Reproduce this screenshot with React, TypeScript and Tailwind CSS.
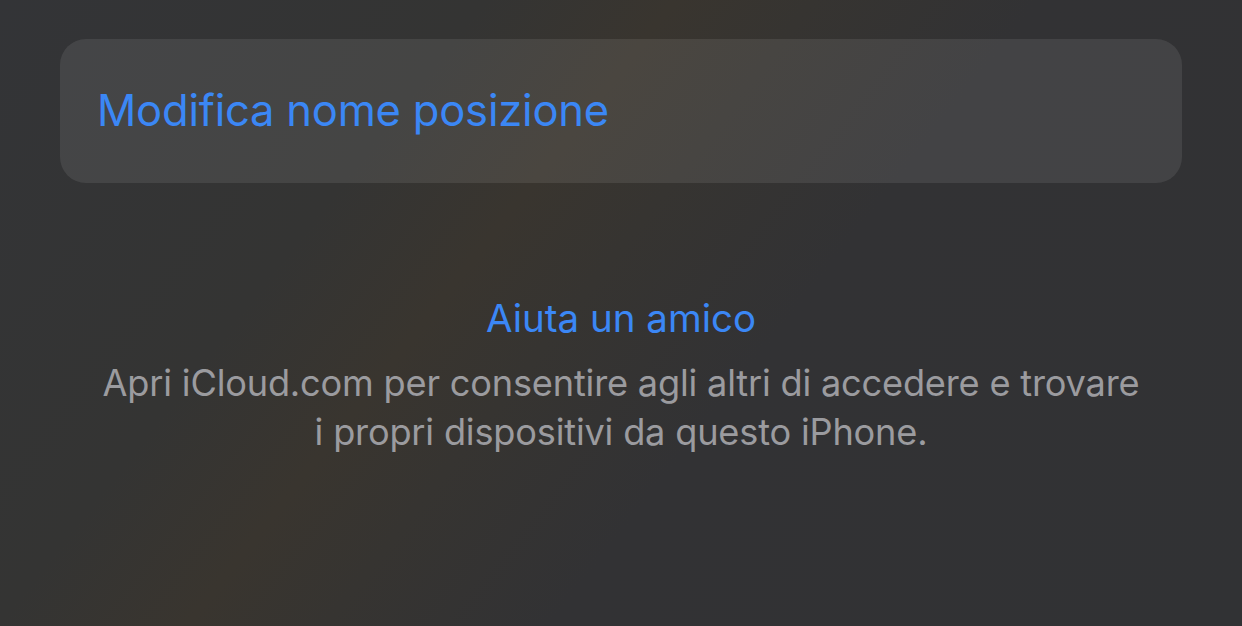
export default function App() {
  return (
    <div className="w-[1242px] h-[626px] overflow-hidden bg-[linear-gradient(128deg,#333437_0%,#343433_28%,#39352f_39%,#363431_47%,#323234_60%,#313234_100%)] font-['Inter','Liberation_Sans',sans-serif] antialiased">
      <div className="pt-[39px] px-[60px]">
        <div className="h-[144px] rounded-[26px] bg-white/[0.085] flex items-center px-[37px]">
          <span className="text-[43.5px] leading-none text-[#3b87f5] tracking-[-0.2px]">
            Modifica nome posizione
          </span>
        </div>
      </div>
      <div className="mt-[112px] flex flex-col items-center text-center px-[40px]">
        <div className="text-[38.5px] leading-[46px] text-[#3b87f5] tracking-[0px]">
          Aiuta un amico
        </div>
        <p className="mt-[18px] text-[36.2px] leading-[49px] text-[#9b9b9f] tracking-[-0.2px]">
          Apri iCloud.com per consentire agli altri di accedere e trovare
          <br />i propri dispositivi da questo iPhone.
        </p>
      </div>
    </div>
  );
}
